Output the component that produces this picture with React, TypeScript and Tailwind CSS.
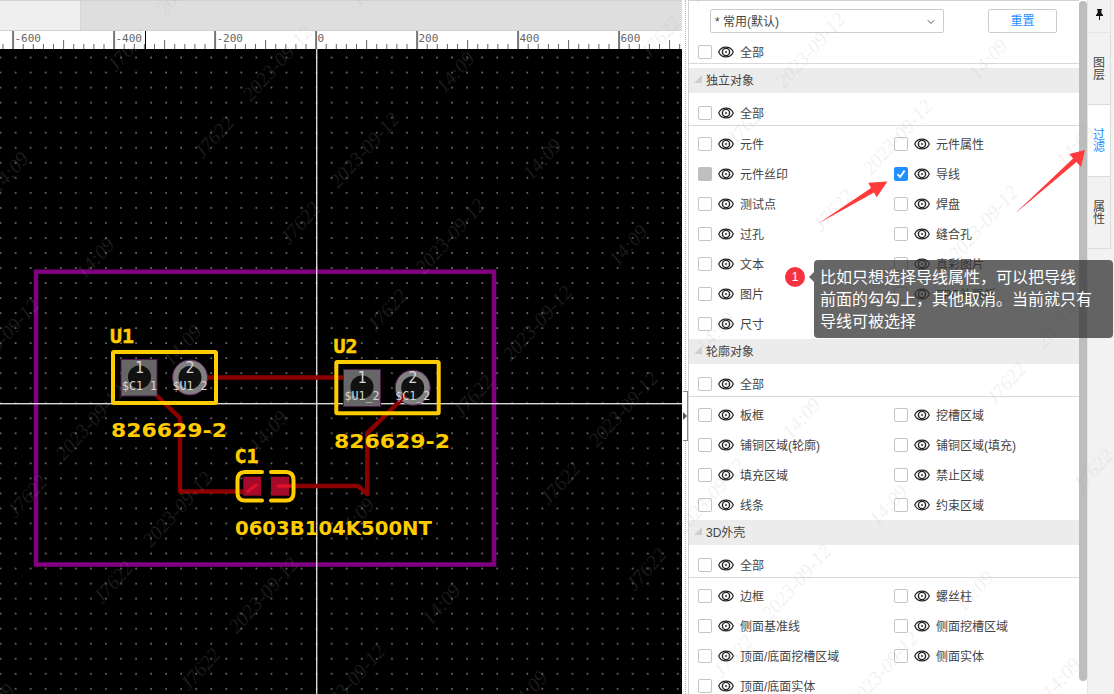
import { ChevronDown } from 'lucide-react';

type Row = { label: string; state?: 'gray' | 'checked' };

const independentRows: (Row | null)[] = [
  { label: '元件' }, { label: '元件属性' },
  { label: '元件丝印', state: 'gray' }, { label: '导线', state: 'checked' },
  { label: '测试点' }, { label: '焊盘' },
  { label: '过孔' }, { label: '缝合孔' },
  { label: '文本' }, { label: '真彩图片' },
  { label: '图片' }, { label: 'FPC补强板' },
  { label: '尺寸' }, null,
];

const outlineRows: (Row | null)[] = [
  { label: '板框' }, { label: '挖槽区域' },
  { label: '铺铜区域(轮廓)' }, { label: '铺铜区域(填充)' },
  { label: '填充区域' }, { label: '禁止区域' },
  { label: '线条' }, { label: '约束区域' },
];

const shellRows: (Row | null)[] = [
  { label: '边框' }, { label: '螺丝柱' },
  { label: '侧面基准线' }, { label: '侧面挖槽区域' },
  { label: '顶面/底面挖槽区域' }, { label: '侧面实体' },
  { label: '顶面/底面实体' }, null,
];

const rulerLabels = ['-600', '-400', '-200', '0', '200', '400', '600'];

// watermark repeats on one slanted lattice
const stamps: { text: string; x: number; y: number }[] = [];
[
  { text: 'J7622', x: 127, y: 50 },
  { text: '2023-09-12', x: 277, y: 63 },
  { text: '14:09', x: 455, y: 72 },
].forEach((seed) => {
  for (let col = -3; col < 4; col++) {
    for (let step = -8; step < 12; step++) {
      const x = seed.x + step * 86.5 + col * 533;
      const y = seed.y + step * 86.5 - col * 13;
      if (x > -60 && x < 1170 && y > -60 && y < 750) stamps.push({ text: seed.text, x, y });
    }
  }
});

const Eye = () => (
  <svg width="16" height="12" viewBox="0 0 16 12" className="shrink-0 block">
    <path d="M0.7 6C3.5 -0.5 12.5 -0.5 15.3 6C12.5 12.5 3.5 12.5 0.7 6Z" fill="none" stroke="#222" strokeWidth="1.2" />
    <circle cx="8" cy="6" r="3.6" fill="none" stroke="#222" strokeWidth="1.4" />
    <circle cx="8" cy="6" r="1.2" fill="#666" />
  </svg>
);

const Check = ({ state }: { state?: Row['state'] }) => {
  if (state === 'gray') return <span className="w-[14px] h-[14px] rounded-[2px] bg-[#bfbfbf] shrink-0" />;
  if (state === 'checked') {
    return (
      <span className="w-[14px] h-[14px] rounded-[2px] bg-[#1e90ff] shrink-0 flex items-center justify-center">
        <svg width="10" height="10" viewBox="0 0 10 10">
          <path d="M1.5 5.2L4 8L8.6 1.6" fill="none" stroke="#fff" strokeWidth="1.8" />
        </svg>
      </span>
    );
  }
  return <span className="w-[14px] h-[14px] rounded-[2px] border border-[#c4c4c4] bg-white shrink-0" />;
};

const FilterItem = ({ label, state }: Row) => (
  <div className="flex items-center h-[30px]">
    <Check state={state} />
    <span className="ml-[6px]"><Eye /></span>
    <span className="ml-[6px] pt-[2px] text-[12px] text-[#444] whitespace-nowrap">{label}</span>
  </div>
);

const AllRow = () => (
  <div className="flex items-center h-[24px]">
    <Check />
    <span className="ml-[6px]"><Eye /></span>
    <span className="ml-[6px] pt-[2px] text-[12px] text-[#444]">全部</span>
  </div>
);

const Section = ({ title, rows }: { title: string; rows: (Row | null)[] }) => (
  <div>
    <div className="relative h-[25px] bg-[#ececec] flex items-center pl-[17px] text-[12px] text-[#444]">
      <svg width="8" height="8" viewBox="0 0 8 8" className="absolute left-[5px] top-[7px]">
        <path d="M8 0V8H0Z" fill="#cfcfcf" />
      </svg>
      {title}
    </div>
    <div className="pt-[8px] border-b border-[#d9d9d9] h-[33px] pl-[9px]">
      <AllRow />
    </div>
    <div className="pt-[3px] pl-[9px] grid grid-cols-[196px_1fr]">
      {rows.map((row, i) => (row ? <FilterItem key={i} {...row} /> : <div key={i} />))}
    </div>
  </div>
);

const Ruler = () => (
  <svg width="682" height="18" viewBox="0 31 682 18" className="block bg-white">
    {Array.from({ length: 70 }).map((_, i) => {
      const x = 2.5 + i * 10.1;
      const kind = (i - 1) % 10 === 0 ? 'major' : (i - 1) % 5 === 0 ? 'mid' : 'minor';
      if (kind === 'major') return <rect key={i} x={x - 0.5} y="31" width="2" height="18" fill="#777" />;
      return <rect key={i} x={x} y={kind === 'mid' ? 40 : 44} width="1" height={kind === 'mid' ? 9 : 5} fill="#666" />;
    })}
    <rect x="145" y="31" width="1" height="18" fill="#000" />
    {rulerLabels.map((label, i) => (
      <text key={label} x={14.5 + i * 101} y="42" fontSize="11" fill="#666" fontFamily="'DejaVu Sans Mono', monospace">
        {label}
      </text>
    ))}
  </svg>
);

const silkShort = { fill: '#ffcc00', stroke: '#ffcc00', strokeWidth: 0.5, fontFamily: "'DejaVu Sans Mono', monospace", fontWeight: 700, fontSize: 20 };
const silkLong = { fill: '#ffcc00', fontFamily: "'DejaVu Sans', sans-serif", fontWeight: 700, fontSize: 20, lengthAdjust: 'spacingAndGlyphs' as const };
const padText = { fill: '#d6d6d6', fontFamily: "'DejaVu Sans Mono', monospace" };

const Board = () => (
  <svg width="682" height="645" viewBox="0 49 682 645" className="block">
    <defs>
      <pattern id="dots" x="8" y="50" width="15.05" height="15.03" patternUnits="userSpaceOnUse">
        <circle cx="7.6" cy="7.6" r="0.75" fill="#c8c8c8" />
      </pattern>
    </defs>
    <rect x="0" y="49" width="682" height="645" fill="#000" />
    <rect x="0" y="49" width="682" height="645" fill="url(#dots)" />
    <rect x="36" y="271.7" width="458" height="292.8" fill="none" stroke="#800080" strokeWidth="4.5" />
    <rect x="316" y="49" width="1.4" height="645" fill="#d8d8d8" />
    <rect x="0" y="403" width="682" height="1.4" fill="#d8d8d8" />

    {/* traces */}
    <g fill="none" stroke="#8b0000" strokeWidth="4.5" strokeLinejoin="round">
      <path d="M205 377.5H350" />
      <path d="M155 394L180 418V491.5H250" />
      <path d="M278 486H358L367.3 494V433L402 399" />
    </g>

    {/* U1 */}
    <rect x="113" y="352" width="103" height="51" rx="1" fill="none" stroke="#ffcc00" strokeWidth="4" strokeLinejoin="round" />
    <rect x="121" y="359.5" width="36" height="36.5" fill="#666" stroke="#4d1a4d" />
    <circle cx="139.5" cy="377" r="11.5" fill="#111" />
    <circle cx="190" cy="377.5" r="17.5" fill="#808080" stroke="#5a1a5a" />
    <circle cx="190" cy="377.5" r="11.5" fill="#111" />
    <text x="139.5" y="373" textAnchor="middle" fontSize="15" {...padText}>1</text>
    <text x="190" y="373" textAnchor="middle" fontSize="15" {...padText}>2</text>
    <text x="139.5" y="390" textAnchor="middle" fontSize="11.6" {...padText}>$C1 1</text>
    <text x="190" y="390" textAnchor="middle" fontSize="11.6" {...padText}>$U1 2</text>

    {/* U2 */}
    <rect x="336.3" y="362" width="102.4" height="51.3" rx="1" fill="none" stroke="#ffcc00" strokeWidth="4" strokeLinejoin="round" />
    <rect x="343.5" y="369.5" width="37" height="37" fill="#666" stroke="#4d1a4d" />
    <circle cx="362" cy="387" r="11.5" fill="#111" />
    <circle cx="412.7" cy="387.7" r="17.5" fill="#808080" stroke="#5a1a5a" />
    <circle cx="412.7" cy="387.7" r="11.5" fill="#111" />
    <path d="M398 402L405 395" stroke="#8b0000" strokeWidth="4" />
    <text x="362" y="383" textAnchor="middle" fontSize="15" {...padText}>1</text>
    <text x="412.7" y="383" textAnchor="middle" fontSize="15" {...padText}>2</text>
    <text x="362" y="400" textAnchor="middle" fontSize="11.6" {...padText}>$U1_2</text>
    <text x="412.7" y="400" textAnchor="middle" fontSize="11.6" {...padText}>$C1_2</text>

    {/* C1 */}
    <rect x="243.3" y="476.7" width="17.7" height="19" fill="#a50a2a" />
    <rect x="271" y="476.7" width="18" height="19" fill="#a50a2a" />
    <path d="M248 491.5L256 485" stroke="#e0102a" strokeWidth="3" strokeLinecap="round" />
    <path d="M278 486H289" stroke="#e0102a" strokeWidth="3.5" strokeLinecap="round" />
    <path d="M262 472H245Q237.5 472 237.5 480V493Q237.5 500.5 245 500.5H262" fill="none" stroke="#ffcc00" strokeWidth="4" strokeLinecap="round" />
    <path d="M271 472H286Q293.5 472 293.5 480V493Q293.5 500.5 286 500.5H271" fill="none" stroke="#ffcc00" strokeWidth="4" strokeLinecap="round" />

    <text x="110" y="343" {...silkShort}>U1</text>
    <text x="111" y="437.3" textLength="116" {...silkLong}>826629-2</text>
    <text x="333.5" y="353" {...silkShort}>U2</text>
    <text x="334" y="447.5" textLength="116" {...silkLong}>826629-2</text>
    <text x="234.5" y="463" {...silkShort}>C1</text>
    <text x="235" y="535" textLength="197" {...silkLong}>0603B104K500NT</text>
  </svg>
);

const SideTab = ({ chars, active }: { chars: string[]; active?: boolean }) => (
  <div
    className={`h-[72px] w-[23px] flex flex-col items-center justify-center border-r border-b border-[#dcdcdc] text-[12px] leading-[12px] ${
      active ? 'bg-white text-[#1e90ff]' : 'bg-[#f2f2f2] text-[#444]'
    }`}
  >
    {chars.map((c) => (
      <span key={c}>{c}</span>
    ))}
  </div>
);

export default function App() {
  return (
    <div className="relative w-[1114px] h-[694px] overflow-hidden flex bg-white [font-family:'Liberation_Sans','Noto_Sans_CJK_SC',sans-serif]">
      {/* Canvas side */}
      <div className="w-[682px] flex flex-col shrink-0">
        <div className="h-[31px] flex bg-[#dedede] border-t border-b border-[#d2d2d2]">
          <div className="w-[81px] bg-[#efefef] border-r border-[#d6d6d6]" />
        </div>
        <Ruler />
        <Board />
      </div>

      {/* Splitter */}
      <div className="relative w-[6px] shrink-0 bg-white flex justify-center">
        <div className="h-full border-l border-dotted border-[#b5b5b5]" />
        <div className="absolute left-[1px] top-[391px] w-[5px] h-[50px] bg-white border border-l-0 border-[#8a8a8a] flex items-center">
          <svg width="4" height="8" viewBox="0 0 4 8">
            <path d="M0 0L4 4L0 8Z" fill="#555" />
          </svg>
        </div>
      </div>

      {/* Filter panel */}
      <div className="w-[391px] shrink-0 border-t border-l border-[#d2d2d2] overflow-hidden">
        <div className="flex items-start pt-[8px] pl-[21px] h-[32px]">
          <div className="w-[234px] h-[24px] border border-[#ccc] rounded-[2px] flex items-center justify-between pl-[4px] pr-[6px] pt-[1px] text-[12px] text-[#444]">
            * 常用(默认)
            <ChevronDown size={12} strokeWidth={2} color="#555" />
          </div>
          <button className="ml-[44px] w-[69px] h-[24px] border border-[#ccc] rounded-[2px] text-[12px] text-[#1e90ff]">重置</button>
        </div>
        <div className="h-[31px] pt-[7px] pl-[9px] border-b border-[#d9d9d9]">
          <AllRow />
        </div>
        <div className="mt-[4px]">
          <Section title="独立对象" rows={independentRows} />
          <Section title="轮廓对象" rows={outlineRows} />
          <Section title="3D外壳" rows={shellRows} />
        </div>
      </div>

      {/* Scrollbar */}
      <div className="w-[8px] shrink-0 bg-white pt-[1px]">
        <div className="h-[680px] bg-[#bdbdbd] rounded-b-[4px] rounded-t-[4px]" />
      </div>

      {/* Side tabs */}
      <div className="flex-1 bg-[#f2f2f2] flex flex-col border-l border-[#e4e4e4]">
        <div className="h-[33px] w-[23px] flex justify-center pt-[9px] border-r border-b border-[#e6e6e6]">
          <svg width="7" height="11" viewBox="0 0 7 11">
            <path d="M1 0H6V1H5.4V4L7 6V7H4V11H3V7H0V6L1.6 4V1H1Z" fill="#111" />
          </svg>
        </div>
        <SideTab chars={['图', '层']} />
        <SideTab chars={['过', '滤']} active />
        <SideTab chars={['属', '性']} />
      </div>

      {/* Watermark over everything */}
      <div className="absolute inset-0 pointer-events-none overflow-hidden">
        {stamps.map((s, i) => (
          <span
            key={i}
            className="absolute -translate-x-1/2 -translate-y-1/2 -rotate-[48deg] whitespace-nowrap italic text-[20px] text-[#aaaaaa2b] [font-family:'Liberation_Serif',serif]"
            style={{ left: s.x, top: s.y }}
          >
            {s.text}
          </span>
        ))}
      </div>

      {/* Annotation arrows */}
      <svg width="1114" height="694" className="absolute inset-0 pointer-events-none">
        <polygon points="818.3,223.5 871,188 868.3,182.7 887.5,181.5 876.7,197.3 874,192.5" fill="#ff3b3b" />
        <polygon points="1015,213.5 1073,158.5 1069.3,154 1085,150 1081,167 1076.5,162" fill="#ff3b3b" />
      </svg>

      {/* Callout */}
      <div className="absolute left-[785px] top-[267px] w-[20px] h-[20px] rounded-full bg-[#f5333f] text-white text-[12px] flex items-center justify-center">
        1
      </div>
      <div className="absolute left-[814px] top-[260px] w-[299px] h-[78px] rounded-[4px] bg-[#333333bf] text-white text-[16px] leading-[22px] pl-[6px] pt-[7px]">
        <div className="absolute left-[-5px] top-[12px] w-0 h-0 border-y-[5px] border-y-transparent border-r-[5px] border-r-[#666]" />
        比如只想选择导线属性，可以把导线
        <br />
        前面的勾勾上，其他取消。当前就只有
        <br />
        导线可被选择
      </div>
    </div>
  );
}
